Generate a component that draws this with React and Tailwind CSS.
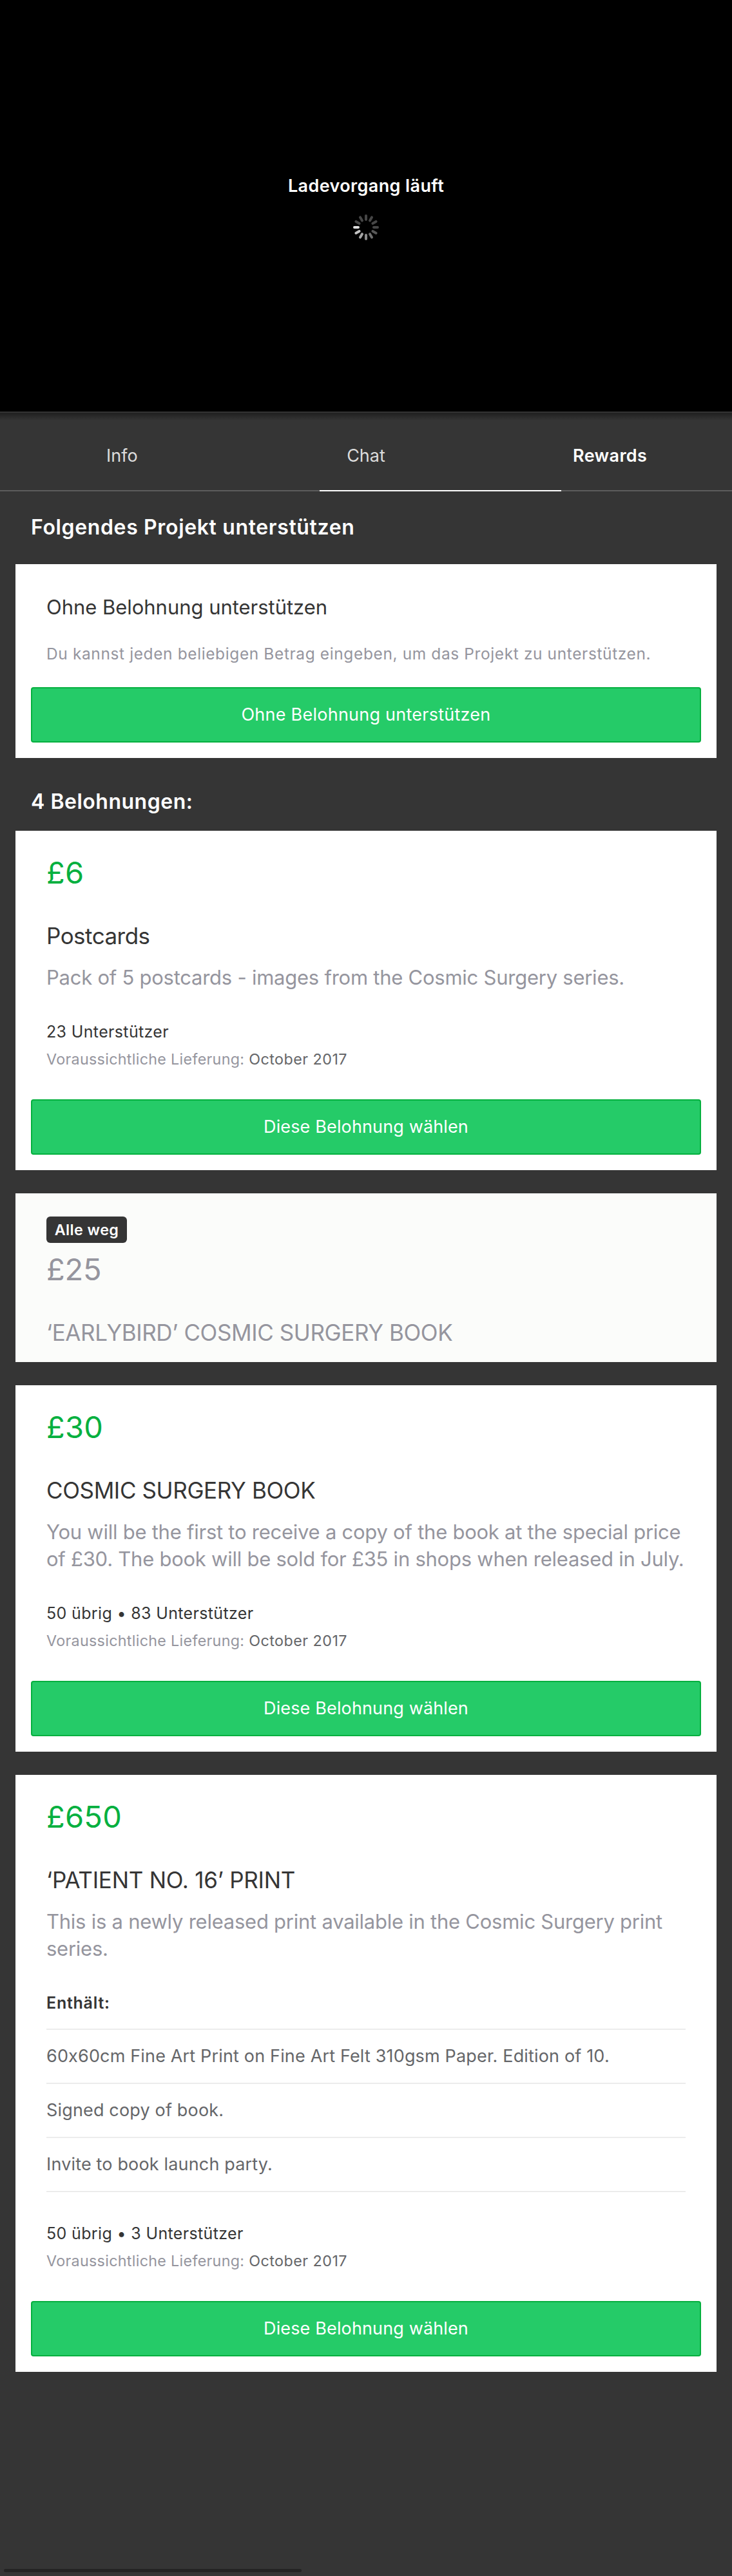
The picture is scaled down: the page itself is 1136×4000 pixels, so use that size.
const SPOKES = [
  "#464646", "#464646", "#464646", "#464646", "#585858", "#6e6e6e",
  "#8c8c8c", "#a6a6a6", "#c2c2c2", "#dedede", "#464646", "#464646",
];

function Spinner() {
  return (
    <svg className="mt-[27px] size-10" viewBox="-20 -20 40 40" aria-hidden="true">
      {SPOKES.map((color, i) => (
        <line
          key={i}
          x1="0"
          y1="-18"
          x2="0"
          y2="-12"
          stroke={color}
          strokeWidth="4"
          strokeLinecap="round"
          transform={`rotate(${i * 30})`}
        />
      ))}
    </svg>
  );
}

function Tabs() {
  return (
    <nav className="relative h-[124px] border-t-2 border-b-2 border-t-[#333333] border-b-[#5c5c5c]">
      <div className="h-3 bg-linear-to-b from-[#202020] to-[#353535]" />
      <div className="mt-[38px] grid grid-cols-3 text-center text-[27px] leading-[34px] text-[#dcdcdc]">
        <span>Info</span>
        <span>Chat</span>
        <span className="font-semibold tracking-[0.013em] text-white">Rewards</span>
      </div>
      <div className="absolute -bottom-0.5 left-[496px] h-0.5 w-[375px] bg-white" />
    </nav>
  );
}

function PledgeButton({ children, className }) {
  return (
    <button
      className={`flex h-[86px] w-full items-center justify-center rounded border-2 border-[#05b03f] bg-[#25cb68] text-[27px] leading-[34px] text-white ${className}`}
    >
      {children}
    </button>
  );
}

function Reward({ price, title, titleClass, text, includes, backers }) {
  return (
    <article className="bg-white px-6 pt-[37px] pb-6">
      <div className="px-6">
        <p className="text-[47px] leading-[56px] tracking-[0.005em] text-[#05b03f]">{price}</p>
        <h3 className={`mt-12 text-[35px] leading-[44px] text-[#353535] ${titleClass}`}>{title}</h3>
        <p className="mt-[22px] text-[31px] leading-[42px] tracking-[-0.008em] text-[#95959e]">{text}</p>
        {includes && (
          <div className="mt-[47px] mb-12">
            <h4 className="text-[25px] leading-8 font-semibold tracking-[0.03em] text-[#353535]">Enthält:</h4>
            <ul className="mt-6 border-b-2 border-[#ececec] text-[27px] leading-[34px] tracking-[0.006em] text-[#656669]">
              {includes.map((item) => (
                <li key={item} className="border-t-2 border-[#ececec] py-6">{item}</li>
              ))}
            </ul>
          </div>
        )}
        <p className={`text-[25px] leading-8 tracking-[0.014em] text-[#353535] ${includes ? "" : "mt-[47px]"}`}>
          {backers}
        </p>
        <p className="mt-3 text-[23.3px] leading-[30px] tracking-[0.013em] text-[#95959e]">
          Voraussichtliche Lieferung: <span className="tracking-[0.02em] text-[#656669]">October 2017</span>
        </p>
      </div>
      <PledgeButton className="mt-[47px] tracking-[0.005em]">Diese Belohnung wählen</PledgeButton>
    </article>
  );
}

function SoldOutReward() {
  return (
    <article className="bg-[#fbfcfa] px-12 pt-9 pb-6 text-[#95959e]">
      <span className="flex h-[41px] w-[125px] items-center justify-center rounded-md bg-[#353535] text-[23.3px] leading-[30px] font-semibold tracking-[0.018em] text-white">
        Alle weg
      </span>
      <p className="mt-[13px] text-[47px] leading-[56px] tracking-[-0.004em]">£25</p>
      <h3 className="mt-12 text-[35px] leading-[44px] tracking-[-0.0116em]">‘EARLYBIRD’ COSMIC SURGERY BOOK</h3>
    </article>
  );
}

export default function App() {
  return (
    <div className="h-[4000px] w-[1136px] overflow-hidden bg-[#353535] font-['Inter',sans-serif]">
      <section className="flex h-[639px] flex-col items-center bg-black pt-[272px]">
        <p className="text-[27px] leading-[34px] font-semibold tracking-[0.014em] text-white">Ladevorgang läuft</p>
        <Spinner />
      </section>
      <Tabs />
      <main className="px-6">
        <h2 className="h-[113px] px-6 pt-9 text-[32px] leading-10 font-semibold tracking-[0.02em] text-white">
          Folgendes Projekt unterstützen
        </h2>
        <article className="bg-white px-6 pt-[47px] pb-6">
          <h3 className="px-6 text-[31px] leading-10 tracking-[-0.001em] text-[#353535]">Ohne Belohnung unterstützen</h3>
          <p className="mt-9 px-6 text-[24.5px] leading-8 tracking-[0.0248em] whitespace-nowrap text-[#95959e]">
            Du kannst jeden beliebigen Betrag eingeben, um das Projekt zu unterstützen.
          </p>
          <PledgeButton className="mt-9 tracking-[0.009em]">Ohne Belohnung unterstützen</PledgeButton>
        </article>
        <h2 className="h-[113px] px-6 pt-12 text-[32px] leading-10 font-semibold tracking-[0.016em] text-white">
          4 Belohnungen:
        </h2>
        <div className="flex flex-col gap-9">
          <Reward
            price="£6"
            title="Postcards"
            titleClass="tracking-[-0.015em]"
            text="Pack of 5 postcards - images from the Cosmic Surgery series."
            backers="23 Unterstützer"
          />
          <SoldOutReward />
          <Reward
            price="£30"
            title="COSMIC SURGERY BOOK"
            titleClass="tracking-[-0.011em]"
            text="You will be the first to receive a copy of the book at the special price of £30. The book will be sold for £35 in shops when released in July."
            backers="50 übrig • 83 Unterstützer"
          />
          <Reward
            price="£650"
            title="‘PATIENT NO. 16’ PRINT"
            titleClass="tracking-[-0.007em]"
            text="This is a newly released print available in the Cosmic Surgery print series."
            includes={[
              "60x60cm Fine Art Print on Fine Art Felt 310gsm Paper. Edition of 10.",
              "Signed copy of book.",
              "Invite to book launch party.",
            ]}
            backers="50 übrig • 3 Unterstützer"
          />
        </div>
      </main>
      <div className="mt-[306px] ml-1.5 h-[5px] w-[462px] rounded-full bg-[#232323]" />
    </div>
  );
}
